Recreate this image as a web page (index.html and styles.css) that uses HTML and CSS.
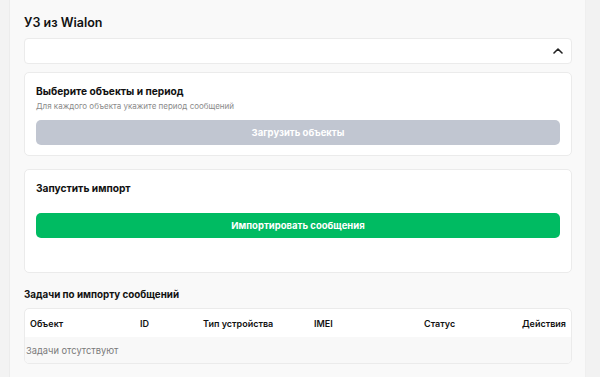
FILE: index.html
```html
<!DOCTYPE html>
<html lang="ru">
<head>
  <meta charset="UTF-8" />
  <title>УЗ из Wialon</title>
  <link rel="stylesheet" href="styles.css">
</head>
<body>
  <div class="side-left"></div>

  <main class="main">
    <h1 class="page-title">УЗ из Wialon</h1>

    <div class="select">
      <svg class="chevron" width="10" height="6" viewBox="0 0 10 6">
        <path d="M1 5 L5 1 L9 5" fill="none" stroke="#222" stroke-width="1.6" stroke-linecap="round" stroke-linejoin="round"/>
      </svg>
    </div>

    <section class="card card-objects">
      <div class="card-title">Выберите объекты и период</div>
      <div class="card-sub">Для каждого объекта укажите период сообщений</div>
      <button class="btn btn-disabled">Загрузить объекты</button>
    </section>

    <section class="card card-import">
      <div class="card-title">Запустить импорт</div>
      <button class="btn btn-green">Импортировать сообщения</button>
    </section>

    <h2 class="section-title">Задачи по импорту сообщений</h2>

    <div class="table">
      <div class="table-head">
        <div>Объект</div>
        <div>ID</div>
        <div>Тип устройства</div>
        <div>IMEI</div>
        <div>Статус</div>
        <div class="right">Действия</div>
      </div>
      <div class="table-empty">Задачи отсутствуют</div>
    </div>
  </main>

  <div class="side-right"></div>
</body>
</html>
```

FILE: styles.css
```css
* {
  box-sizing: border-box;
}

html, body {
  margin: 0;
  padding: 0;
  height: 100%;
}

body {
  display: flex;
  background: #f3f3f3;
  font-family: Inter, "Noto Sans", sans-serif;
  color: #111;
  overflow: hidden;
}

.side-left {
  width: 10px;
  flex-shrink: 0;
  border-right: 1px solid #ececec;
}

.side-right {
  width: 15px;
  flex-shrink: 0;
  background: #f2f2f2;
  border-left: 1px solid #efefef;
}

.main {
  flex: 1;
  background: #f9f9f9;
  padding: 14px 13px 0 14px;
}

.page-title {
  margin: 0;
  font-size: 12.5px;
  font-weight: 600;
  line-height: 17px;
}

.select {
  margin-top: 7px;
  height: 26px;
  background: #fff;
  border: 1px solid #ebebeb;
  border-radius: 4px;
  display: flex;
  align-items: center;
  justify-content: flex-end;
  padding-right: 8px;
}

.chevron {
  display: block;
}

.card {
  background: #fff;
  border: 1px solid #ebebeb;
  border-radius: 5px;
  padding: 0 11px;
}

.card-objects {
  margin-top: 8px;
  height: 84px;
  padding-top: 11px;
}

.card-import {
  margin-top: 13px;
  height: 104px;
  padding-top: 11px;
}

.card-title {
  font-size: 10.2px;
  font-weight: 700;
  line-height: 14px;
}

.card-sub {
  margin-top: 2px;
  font-size: 8px;
  color: #8a8a8a;
  line-height: 12px;
}

.btn {
  display: block;
  width: 100%;
  height: 25px;
  border: none;
  border-radius: 5px;
  color: #fff;
  font-family: Inter, "Noto Sans", sans-serif;
  font-size: 9.5px;
  font-weight: 700;
}

.card-objects .btn {
  margin-top: 8px;
}

.card-import .btn {
  margin-top: 18px;
}

.btn-disabled {
  background: #c1c6d1;
}

.btn-green {
  background: #00bb62;
}

.section-title {
  margin: 15px 0 0;
  font-size: 9.8px;
  font-weight: 700;
  line-height: 14px;
}

.table {
  margin-top: 6px;
  border: 1px solid #ebebeb;
  border-radius: 5px;
  overflow: hidden;
  background: #fff;
}

.table-head {
  display: grid;
  grid-template-columns: 110px 63px 111px 110px 1fr 1fr;
  align-items: center;
  height: 28px;
  padding: 0 5px;
  font-size: 9px;
  font-weight: 600;
}

.table-head .right {
  text-align: right;
}

.table-empty {
  height: 26px;
  background: #f8f8f8;
  display: flex;
  align-items: center;
  padding-left: 1px;
  font-size: 9.3px;
  color: #7a7a7a;
}
```
